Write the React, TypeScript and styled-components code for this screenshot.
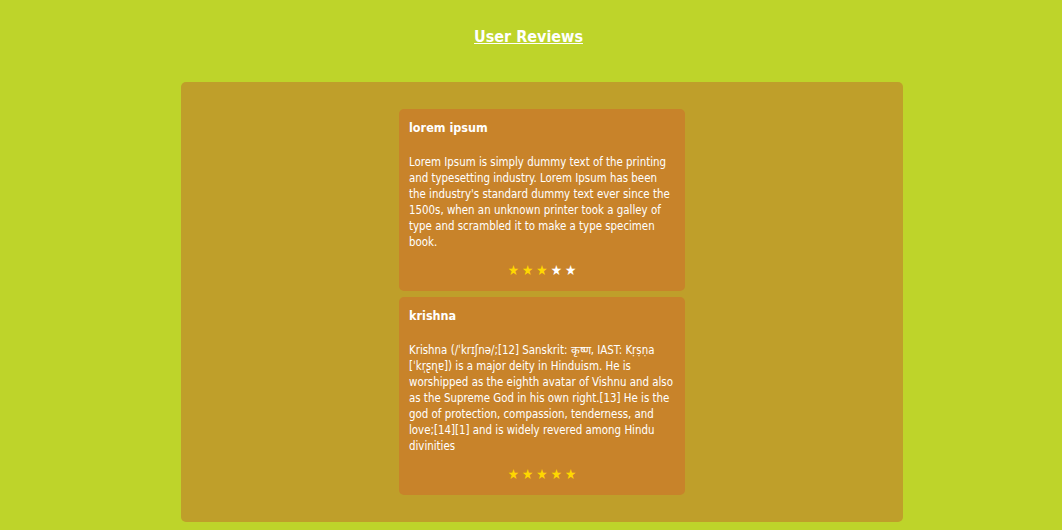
import React from "react";
import styled, { createGlobalStyle } from "styled-components";

const Global = createGlobalStyle`
  html, body { margin: 0; padding: 0; background: #bed42a; }
  body { font-family: "DejaVu Sans Condensed", "DejaVu Sans", sans-serif; }
`;

const Page = styled.div`
  padding: 24px 0 8px;
`;

const Title = styled.h1`
  margin: 0 0 32px;
  padding-right: 5px;
  text-align: center;
  font-size: 16px;
  font-weight: bold;
  color: #ffffff;
  text-decoration: underline;
  line-height: 26px;
`;

const Panel = styled.section`
  margin-left: 181px;
  width: 722px;
  background: #bf9f2a;
  border-radius: 5px;
  padding: 27px 0 27px;
  display: flex;
  flex-direction: column;
  align-items: center;
  gap: 6px;
`;

const Card = styled.article`
  width: 286px;
  box-sizing: border-box;
  background: #c8832a;
  border-radius: 5px;
  padding: 10px 10px 13px;
  color: #ffffff;
`;

const Name = styled.h2`
  margin: 0 0 18px;
  font-size: 12.5px;
  font-weight: bold;
  line-height: 17px;
`;

const Text = styled.p`
  margin: 0 0 12px;
  font-size: 11.4px;
  line-height: 16px;
`;

const Stars = styled.div`
  display: flex;
  justify-content: center;
  gap: 3px;
  font-size: 14px;
  line-height: 16px;
`;

const Star = styled.span<{ $on: boolean }>`
  color: ${(p) => (p.$on ? "#ffd700" : "#ffffff")};
`;

const reviews = [
  {
    name: "lorem ipsum",
    text: "Lorem Ipsum is simply dummy text of the printing and typesetting industry. Lorem Ipsum has been the industry's standard dummy text ever since the 1500s, when an unknown printer took a galley of type and scrambled it to make a type specimen book.",
    rating: 3,
  },
  {
    name: "krishna",
    text: "Krishna (/ˈkrɪʃnə/;[12] Sanskrit: कृष्ण, IAST: Kṛṣṇa [ˈkr̩ʂɳɐ]) is a major deity in Hinduism. He is worshipped as the eighth avatar of Vishnu and also as the Supreme God in his own right.[13] He is the god of protection, compassion, tenderness, and love;[14][1] and is widely revered among Hindu divinities",
    rating: 5,
  },
];

export default function App() {
  return (
    <>
      <Global />
      <Page>
        <Title>User Reviews</Title>
        <Panel>
          {reviews.map((r) => (
            <Card key={r.name}>
              <Name>{r.name}</Name>
              <Text>{r.text}</Text>
              <Stars>
                {[1, 2, 3, 4, 5].map((i) => (
                  <Star key={i} $on={i <= r.rating}>★</Star>
                ))}
              </Stars>
            </Card>
          ))}
        </Panel>
      </Page>
    </>
  );
}
